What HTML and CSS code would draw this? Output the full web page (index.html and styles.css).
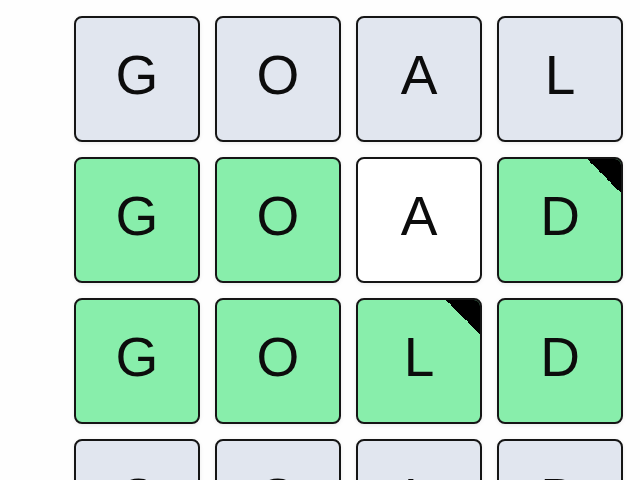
FILE: index.html
```html
<!DOCTYPE html>
<html lang="en">

<head>
    <meta charset="UTF-8">
    <meta name="viewport" content="width=device-width, initial-scale=1.0">
    <title>Word Ladder</title>

    <link rel="stylesheet" href="styles.css">
</head>

<body>

    <section class="board">

        <div class="row">
            <div class="tile">G</div>
            <div class="tile">O</div>
            <div class="tile">A</div>
            <div class="tile">L</div>
        </div>

        <div class="row">
            <div class="tile hit">G</div>
            <div class="tile hit">O</div>
            <div class="tile blank">A</div>
            <div class="tile hit changed">D</div>
        </div>

        <div class="row">
            <div class="tile hit">G</div>
            <div class="tile hit">O</div>
            <div class="tile hit changed">L</div>
            <div class="tile hit">D</div>
        </div>

        <div class="row">
            <div class="tile">C</div>
            <div class="tile">O</div>
            <div class="tile">L</div>
            <div class="tile">D</div>
        </div>

    </section>

</body>

</html>
```
FILE: styles.css
```css
body {
    margin: 0;
    background-color: #fefefe;
    font-family: "Liberation Sans", Arial, sans-serif;
    overflow: hidden;
}

.board {
    display: flex;
    flex-direction: column;
    gap: 15px;
    padding: 16px 0 0 74px;
}

.row {
    display: flex;
    gap: 15px;
}

.tile {
    position: relative;
    overflow: hidden;
    box-sizing: border-box;
    width: 126px;
    height: 126px;
    flex: none;
    display: flex;
    align-items: center;
    justify-content: center;
    padding-bottom: 9px;
    font-size: 55px;
    color: #0c0c0c;
    background-color: #e1e6ef;
    border: 2px solid #151515;
    border-radius: 8px;
    box-shadow: 0 1px 4px rgba(0, 0, 0, 0.08);
}

.tile.hit {
    background-color: #88eeab;
}

.tile.blank {
    background-color: #ffffff;
}

/* little black flag in the corner of the letter that changed */
.tile.changed::after {
    content: "";
    position: absolute;
    top: 0;
    right: 0;
    width: 34px;
    height: 34px;
    background: linear-gradient(to bottom left, #000 50%, transparent 50%);
}
```
